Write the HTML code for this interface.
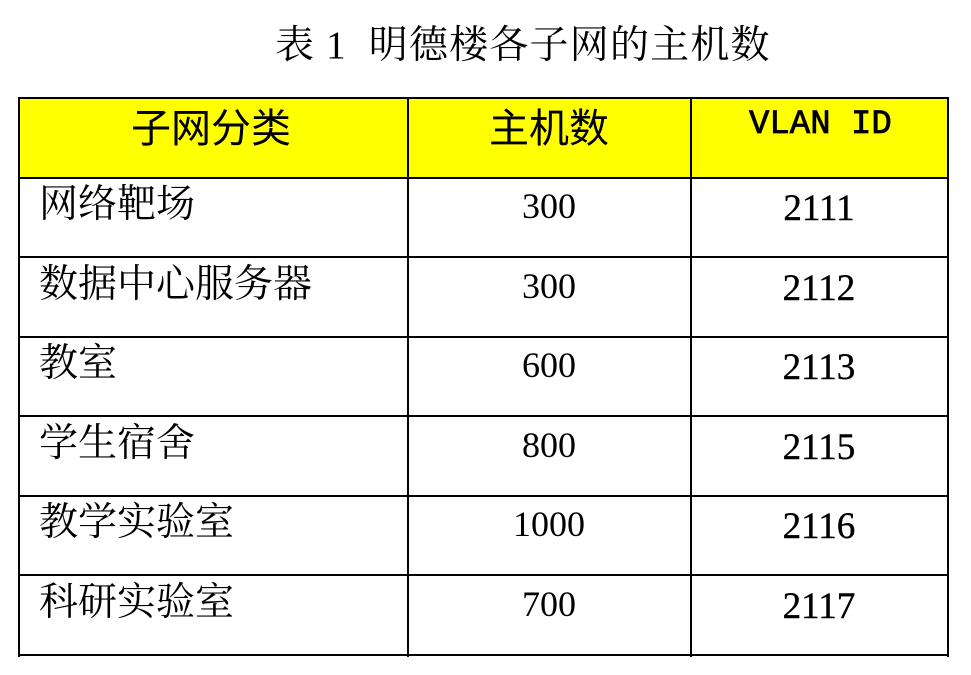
<!DOCTYPE html>
<html><head><meta charset="utf-8"><style>
body{margin:0;width:971px;height:675px;background:#fff;position:relative;overflow:hidden;font-family:"Liberation Serif","Noto Serif CJK SC",serif;color:#000}
.t{position:absolute;white-space:nowrap;line-height:1}
.h{position:absolute;left:18px;top:97px;width:931px;height:81px;background:#ff0}
.hl{position:absolute;left:18px;width:931px;height:2px;background:#000}
.vl{position:absolute;top:97px;width:2px;height:560px;background:#000}
.c2{width:120px;text-align:center;left:489px;font-size:36px}
.c3{width:120px;text-align:center;left:759px;font-size:37px;-webkit-text-stroke:0.4px #000}
.c1{left:39px;font-size:39px}
</style></head><body>
<div class="t" style="left:275px;top:26px;font-size:39px;letter-spacing:1.2px">表 1&nbsp; 明德楼各子网的主机数</div>
<div class="h"></div>
<div class="hl" style="top:97px"></div>
<div class="hl" style="top:177px"></div>
<div class="hl" style="top:256px"></div>
<div class="hl" style="top:336px"></div>
<div class="hl" style="top:415px"></div>
<div class="hl" style="top:495px"></div>
<div class="hl" style="top:574px"></div>
<div class="hl" style="top:654px"></div>
<div class="vl" style="left:18px"></div>
<div class="vl" style="left:407px"></div>
<div class="vl" style="left:690px"></div>
<div class="vl" style="left:947px"></div>
<div class="t" style="left:131px;top:105px;font-size:40px;font-family:'Noto Sans CJK SC',sans-serif;font-weight:400">子网分类</div>
<div class="t" style="left:489px;top:105px;font-size:40px;font-family:'Noto Sans CJK SC',sans-serif;font-weight:400">主机数</div>
<div class="t" style="left:749px;top:108px;font-size:34px;font-family:'Liberation Mono',monospace;-webkit-text-stroke:0.8px #000">VLAN ID</div>
<div class="t c1" style="top:185px">网络靶场</div>
<div class="t c1" style="top:265px">数据中心服务器</div>
<div class="t c1" style="top:344px">教室</div>
<div class="t c1" style="top:424px">学生宿舍</div>
<div class="t c1" style="top:503px">教学实验室</div>
<div class="t c1" style="top:583px">科研实验室</div>
<div class="t c2" style="top:188px">300</div>
<div class="t c2" style="top:268px">300</div>
<div class="t c2" style="top:347px">600</div>
<div class="t c2" style="top:427px">800</div>
<div class="t c2" style="top:506px">1000</div>
<div class="t c2" style="top:586px">700</div>
<div class="t c3" style="top:190px">2111</div>
<div class="t c3" style="top:270px">2112</div>
<div class="t c3" style="top:349px">2113</div>
<div class="t c3" style="top:429px">2115</div>
<div class="t c3" style="top:508px">2116</div>
<div class="t c3" style="top:588px">2117</div>
</body></html>
